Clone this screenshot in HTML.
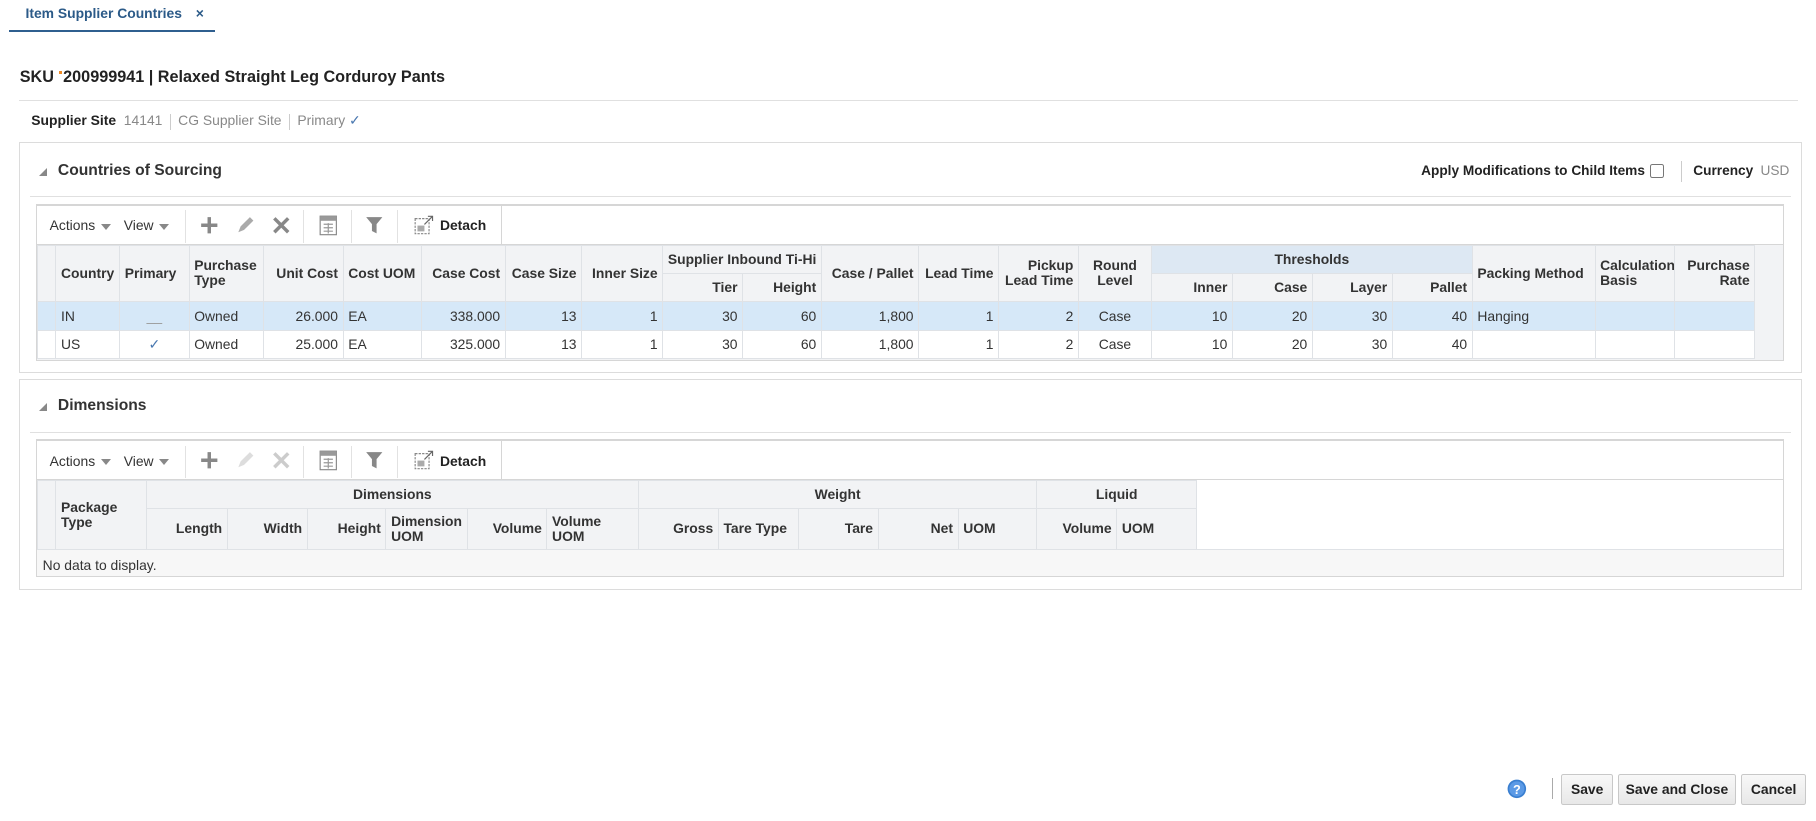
<!DOCTYPE html>
<html><head><meta charset="utf-8">
<style>
html{zoom:1.1582}
body{margin:0;width:1568px;height:709px;position:relative;background:#fff;font-family:"Liberation Sans",Arial,sans-serif;font-size:12px;color:#333;overflow:hidden}
.abs{position:absolute}
.tab{left:22px;top:4px;color:#2b5a88;font-size:12px;font-weight:bold}
.tabx{left:169px;top:4px;color:#2b5a88;font-size:12px;font-weight:bold}
.tabline{left:8px;top:26px;width:178px;height:2px;background:#2f5f8f}
.title{left:17px;top:59px;font-size:14px;font-weight:bold;color:#222}
.mark{display:inline-block;width:3px;height:3px;background:#f08a24;vertical-align:top;margin:2px 1px 0 4px}
.hr{background:#e0e0e0;height:1px}
.sup{left:27px;top:97px;font-size:12px;color:#888}
.sup b{color:#222}
.sup .s{display:inline-block;width:1px;height:14px;background:#ccc;vertical-align:middle;margin:0 3px}
.panel{border:1px solid #dcdcdc;left:16px;width:1538px}
.ptitle{font-size:13.5px;font-weight:bold;color:#333}
.tri{width:0;height:0;border-left:7px solid transparent;border-bottom:7px solid #888}
.box{left:31px;width:1508px;border:1px solid #d6d6d6;border-top:2px solid #d6d6d6}
.tb{height:33px;position:relative;border-bottom:1px solid #d6d6d6;background:#fff}
.tb span{position:absolute;top:10px}
.vs{position:absolute;top:4px;width:1px;height:28px;background:#e2e2e2}
.dd{display:inline-block;width:0;height:0;border-left:5px solid transparent;border-right:5px solid transparent;border-top:6px solid #888;margin-left:5px;vertical-align:middle}
table{border-collapse:collapse;table-layout:fixed;position:absolute;left:0}
th,td{border:1px solid #dfe2e6;padding:0 4px;overflow:hidden;white-space:nowrap}
th{background:#f2f3f5;font-weight:bold;color:#333;font-size:12px;line-height:13px}
td{height:24px;color:#333}
.r{text-align:right}.l{text-align:left}.c{text-align:center}
.sel td{background:#d6e8f8}
.btn{top:668px;height:25px;border:1px solid #c8c8c8;border-radius:2px;background:linear-gradient(#f8f8f8,#e8e8e8);font-weight:bold;font-size:12px;line-height:25px;text-align:center;color:#222}
</style></head><body>
<div class="abs tab">Item Supplier Countries</div>
<div class="abs tabx">×</div>
<div class="abs tabline"></div>
<div class="abs title">SKU<span class="mark"></span>200999941 | Relaxed Straight Leg Corduroy Pants</div>
<div class="abs hr" style="left:16px;top:86px;width:1536px"></div>
<div class="abs sup"><b>Supplier Site</b>&nbsp; 14141 <span class="s"></span> CG Supplier Site <span class="s"></span> Primary <span style="color:#4a78b0">✓</span></div>

<div class="abs panel" style="top:123px;height:197px"></div>
<div class="abs tri" style="left:34px;top:145px"></div>
<div class="abs ptitle" style="left:50px;top:140px">Countries of Sourcing</div>
<div class="abs" style="left:1227px;top:141px;font-weight:bold;color:#222;font-size:11.8px">Apply Modifications to Child Items</div>
<div class="abs" style="left:1425px;top:142px;width:10px;height:10px;border:1px solid #777;border-radius:2px"></div>
<div class="abs" style="left:1451px;top:139px;width:1px;height:18px;background:#ccc"></div>
<div class="abs" style="left:1462px;top:141px;font-weight:bold;color:#222;font-size:11.8px">Currency <span style="font-weight:normal;color:#888;margin-left:3px">USD</span></div>
<div class="abs hr" style="left:26px;top:169px;width:1520px"></div>

<div class="abs box" style="top:176px;height:133px;background:#f2f3f5">
 <div class="tb" style="width:1508px">
  <div class="abs" style="left:401px;top:0;width:1px;height:33px;background:#d6d6d6"></div>
  <span style="left:11px">Actions<i class="dd"></i></span>
  <span style="left:75px">View<i class="dd"></i></span>
  <div class="vs" style="left:128px"></div>
  <svg class="abs" style="left:141px;top:9px" width="16" height="16"><path d="M8 1v14M1 8h14" stroke="#888" stroke-width="3"/></svg>
  <svg class="abs" style="left:172px;top:9px" width="16" height="16"><path d="M2 14l2-5 8-8 3 3-8 8z" fill="#aaa"/></svg>
  <svg class="abs" style="left:203px;top:9px" width="16" height="16"><path d="M2 2l12 12M14 2L2 14" stroke="#888" stroke-width="3"/></svg>
  <div class="vs" style="left:230px"></div>
  <svg class="abs" style="left:244px;top:8px" width="16" height="18"><rect x="1" y="1" width="14" height="16" fill="#fff" stroke="#888"/><rect x="1" y="1" width="14" height="4" fill="#999"/><path d="M4 8h8M4 11h8M4 14h8M8 7v9" stroke="#999"/></svg>
  <div class="vs" style="left:271px"></div>
  <svg class="abs" style="left:283px;top:9px" width="16" height="16"><path d="M1 1h14l-5 6v8l-4-2v-6z" fill="#888"/></svg>
  <div class="vs" style="left:311px"></div>
  <svg class="abs" style="left:326px;top:7px" width="18" height="18"><rect x="1" y="4" width="12" height="13" fill="none" stroke="#888" stroke-dasharray="2 1"/><path d="M9 9l7-7M12 2h4v4" stroke="#666" fill="none"/><rect x="3" y="10" width="6" height="5" fill="#aaa"/></svg>
  <span style="left:348px;font-weight:bold;color:#222">Detach</span>
 </div>
 <table style="top:34px;width:1483px">
  <colgroup><col style="width:16px"><col style="width:55px"><col style="width:60px"><col style="width:64px"><col style="width:69px"><col style="width:68px"><col style="width:72px"><col style="width:66px"><col style="width:70px"><col style="width:69px"><col style="width:68px"><col style="width:84px"><col style="width:69px"><col style="width:69px"><col style="width:63px"><col style="width:70px"><col style="width:69px"><col style="width:69px"><col style="width:69px"><col style="width:106px"><col style="width:69px"><col style="width:69px"></colgroup>
  <tr style="height:24px"><th rowspan="2"></th><th rowspan="2" class="l">Country</th><th rowspan="2" class="l">Primary</th><th rowspan="2" class="l">Purchase<br>Type</th><th rowspan="2" class="r">Unit Cost</th><th rowspan="2" class="l">Cost UOM</th><th rowspan="2" class="r">Case Cost</th><th rowspan="2" class="r">Case Size</th><th rowspan="2" class="r">Inner Size</th><th colspan="2" class="c">Supplier Inbound Ti-Hi</th><th rowspan="2" class="r">Case / Pallet</th><th rowspan="2" class="r">Lead Time</th><th rowspan="2" class="r">Pickup<br>Lead Time</th><th rowspan="2" class="c">Round<br>Level</th><th colspan="4" class="c" style="background:#dde8f3">Thresholds</th><th rowspan="2" class="l">Packing Method</th><th rowspan="2" class="l">Calculation<br>Basis</th><th rowspan="2" class="r">Purchase<br>Rate</th></tr>
  <tr style="height:24px"><th class="r">Tier</th><th class="r">Height</th><th class="r">Inner</th><th class="r">Case</th><th class="r">Layer</th><th class="r">Pallet</th></tr>
  <tr class="sel"><td></td><td>IN</td><td class="c" style="color:#999">__</td><td>Owned</td><td class="r">26.000</td><td>EA</td><td class="r">338.000</td><td class="r">13</td><td class="r">1</td><td class="r">30</td><td class="r">60</td><td class="r">1,800</td><td class="r">1</td><td class="r">2</td><td class="c">Case</td><td class="r">10</td><td class="r">20</td><td class="r">30</td><td class="r">40</td><td>Hanging</td><td></td><td></td></tr>
  <tr style="background:#fff"><td style="background:#fff"></td><td>US</td><td class="c" style="color:#4a78b0">✓</td><td>Owned</td><td class="r">25.000</td><td>EA</td><td class="r">325.000</td><td class="r">13</td><td class="r">1</td><td class="r">30</td><td class="r">60</td><td class="r">1,800</td><td class="r">1</td><td class="r">2</td><td class="c">Case</td><td class="r">10</td><td class="r">20</td><td class="r">30</td><td class="r">40</td><td></td><td></td><td></td></tr>
 </table>
</div>

<div class="abs panel" style="top:327px;height:181px"></div>
<div class="abs tri" style="left:34px;top:348px"></div>
<div class="abs ptitle" style="left:50px;top:343px">Dimensions</div>
<div class="abs hr" style="left:26px;top:373px;width:1520px"></div>
<div class="abs box" style="top:379px;height:117px;background:#fff">
 <div class="tb" style="width:1508px">
  <div class="abs" style="left:401px;top:0;width:1px;height:33px;background:#d6d6d6"></div>
  <span style="left:11px">Actions<i class="dd"></i></span>
  <span style="left:75px">View<i class="dd"></i></span>
  <div class="vs" style="left:128px"></div>
  <svg class="abs" style="left:141px;top:9px" width="16" height="16"><path d="M8 1v14M1 8h14" stroke="#888" stroke-width="3"/></svg>
  <svg class="abs" style="left:172px;top:9px" width="16" height="16"><path d="M2 14l2-5 8-8 3 3-8 8z" fill="#ddd"/></svg>
  <svg class="abs" style="left:203px;top:9px" width="16" height="16"><path d="M2 2l12 12M14 2L2 14" stroke="#ccc" stroke-width="3"/></svg>
  <div class="vs" style="left:230px"></div>
  <svg class="abs" style="left:244px;top:8px" width="16" height="18"><rect x="1" y="1" width="14" height="16" fill="#fff" stroke="#888"/><rect x="1" y="1" width="14" height="4" fill="#999"/><path d="M4 8h8M4 11h8M4 14h8M8 7v9" stroke="#999"/></svg>
  <div class="vs" style="left:271px"></div>
  <svg class="abs" style="left:283px;top:9px" width="16" height="16"><path d="M1 1h14l-5 6v8l-4-2v-6z" fill="#888"/></svg>
  <div class="vs" style="left:311px"></div>
  <svg class="abs" style="left:326px;top:7px" width="18" height="18"><rect x="1" y="4" width="12" height="13" fill="none" stroke="#888" stroke-dasharray="2 1"/><path d="M9 9l7-7M12 2h4v4" stroke="#666" fill="none"/><rect x="3" y="10" width="6" height="5" fill="#aaa"/></svg>
  <span style="left:348px;font-weight:bold;color:#222">Detach</span>
 </div>
 <div class="abs" style="left:0;top:34px;width:1508px;height:59px;background:#fff;border-bottom:1px solid #dfe2e6"></div>
 <table style="top:34px;width:1001px">
  <colgroup><col style="width:16px"><col style="width:78px"><col style="width:70px"><col style="width:69px"><col style="width:68px"><col style="width:70px"><col style="width:69px"><col style="width:79px"><col style="width:69px"><col style="width:69px"><col style="width:69px"><col style="width:69px"><col style="width:68px"><col style="width:69px"><col style="width:69px"></colgroup>
  <tr style="height:24px"><th rowspan="2"></th><th rowspan="2" class="l">Package<br>Type</th><th colspan="6" class="c">Dimensions</th><th colspan="5" class="c">Weight</th><th colspan="2" class="c">Liquid</th></tr>
  <tr style="height:35px"><th class="r">Length</th><th class="r">Width</th><th class="r">Height</th><th class="l">Dimension<br>UOM</th><th class="r">Volume</th><th class="l">Volume<br>UOM</th><th class="r">Gross</th><th class="l">Tare Type</th><th class="r">Tare</th><th class="r">Net</th><th class="l">UOM</th><th class="r">Volume</th><th class="l">UOM</th></tr>
 </table>
 <div class="abs" style="left:0;top:94px;width:1508px;height:23px;background:#f7f7f7"></div>
 <div class="abs" style="left:5px;top:100px">No data to display.</div>
</div>

<svg class="abs" style="left:1301px;top:673px" width="17" height="17"><circle cx="8.5" cy="8.5" r="8" fill="#3a7fd0"/><circle cx="8.5" cy="8.5" r="6.5" fill="#5b9ae6"/><text x="8.5" y="13" font-size="11" font-weight="bold" fill="#fff" text-anchor="middle" font-family="Liberation Sans">?</text></svg>
<div class="abs" style="left:1340px;top:672px;width:1px;height:18px;background:#aaa"></div>
<div class="abs btn" style="left:1348px;width:43px">Save</div>
<div class="abs btn" style="left:1397px;width:100px">Save and Close</div>
<div class="abs btn" style="left:1503px;width:55px">Cancel</div>
</body></html>
